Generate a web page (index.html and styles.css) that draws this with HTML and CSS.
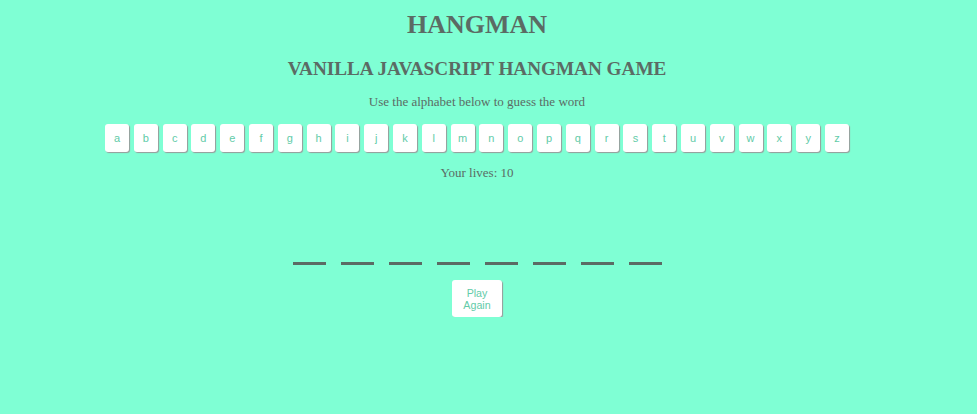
FILE: index.html
```
<!DOCTYPE html>
<html>
<head>
<meta charset="utf-8">
<title>Hangman</title>
<link rel="stylesheet" href="styles.css">
</head>
<body>
<div class="page">
  <h1 class="title">HANGMAN</h1>
  <h3 class="subtitle">VANILLA JAVASCRIPT HANGMAN GAME</h3>
  <p class="hint">Use the alphabet below to guess the word</p>
  <div class="alphabet">
    <button class="letter">a</button><button class="letter">b</button><button class="letter">c</button><button class="letter">d</button><button class="letter">e</button><button class="letter">f</button><button class="letter">g</button><button class="letter">h</button><button class="letter">i</button><button class="letter">j</button><button class="letter">k</button><button class="letter">l</button><button class="letter">m</button><button class="letter">n</button><button class="letter">o</button><button class="letter">p</button><button class="letter">q</button><button class="letter">r</button><button class="letter">s</button><button class="letter">t</button><button class="letter">u</button><button class="letter">v</button><button class="letter">w</button><button class="letter">x</button><button class="letter">y</button><button class="letter">z</button>
  </div>
  <p class="lives">Your lives: 10</p>
  <div class="word">
    <span class="slot"></span><span class="slot"></span><span class="slot"></span><span class="slot"></span><span class="slot"></span><span class="slot"></span><span class="slot"></span><span class="slot"></span>
  </div>
  <div class="actions">
    <button class="reset">Play<br>Again</button>
  </div>
</div>
</body>
</html>
```

FILE: styles.css
```
html, body {
  margin: 0;
  padding: 0;
  background: #7fffd4;
}
body {
  font-family: "Liberation Serif", "Times New Roman", serif;
  color: #5b6b64;
}
.page {
  width: 954px;
  display: flex;
  flex-direction: column;
  align-items: center;
  padding-top: 10px;
}
.title {
  margin: 0;
  font-size: 26px;
  line-height: 29px;
  font-weight: bold;
}
.subtitle {
  margin: 19px 0 0;
  font-size: 19.2px;
  line-height: 21px;
  font-weight: bold;
}
.hint {
  margin: 15px 0 0;
  font-size: 13px;
  line-height: 15px;
}
.alphabet {
  display: flex;
  gap: 4.8px;
  margin-top: 15px;
}
.letter {
  width: 24px;
  height: 28px;
  padding: 0;
  border: none;
  border-radius: 3px;
  background: #fff;
  box-shadow: 1px 1px 1px #9a9a9a;
  font-family: "Liberation Sans", Arial, sans-serif;
  font-size: 11px;
  color: #62cba8;
  cursor: pointer;
}
.lives {
  margin: 13px 0 0;
  font-size: 13px;
  line-height: 15px;
}
.word {
  display: flex;
  gap: 15px;
  margin-top: 82px;
}
.slot {
  display: block;
  width: 33px;
  height: 3px;
  background: #5b6b64;
}
.actions {
  margin-top: 15px;
}
.reset {
  display: block;
  width: 50px;
  height: 37px;
  padding: 1px 0 0;
  border: none;
  border-radius: 3px;
  background: #fff;
  box-shadow: 1px 1px 1px #9a9a9a;
  font-family: "Liberation Sans", Arial, sans-serif;
  font-size: 10.67px;
  line-height: 12px;
  color: #62cba8;
  cursor: pointer;
}
```
